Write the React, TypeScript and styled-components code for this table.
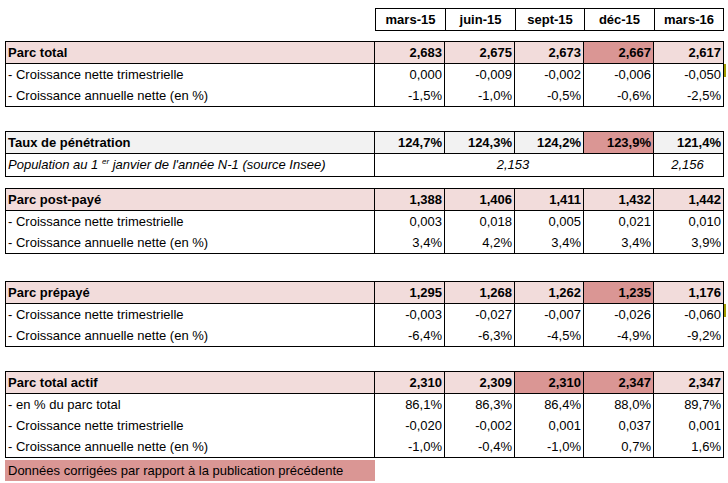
import React from "react";
import styled, { createGlobalStyle } from "styled-components";

const GlobalStyle = createGlobalStyle`
  body {
    margin: 0;
    background: #fff;
    color: #000;
    font-family: "Liberation Sans", Arial, sans-serif;
    font-size: 13px;
  }
`;

const PINK = "#f2dcdb";
const RED = "#da9694";
const GREY = "#f2f2f2";

const Page = styled.div`
  width: 728px;
  height: 483px;
  padding: 8px 0 0 5px;
  box-sizing: border-box;
  display: flex;
  flex-direction: column;
`;

const HeaderBar = styled.div`
  margin-left: 370px;
  width: 349px;
  height: 23px;
  box-sizing: border-box;
  border: 1px solid #000;
  display: grid;
  grid-template-columns: 69px 70px 69px 70px 69px;
`;

const HeaderCell = styled.div`
  font-weight: bold;
  text-align: center;
  line-height: 21px;
  & + & {
    border-left: 1px solid #000;
  }
`;

const Section = styled.div<{ $gap: number }>`
  margin-top: ${(p) => p.$gap}px;
  width: 719px;
  box-sizing: border-box;
  border: 1px solid #000;
  display: grid;
  grid-template-columns: 368px 70px 70px 69px 70px 70px;
`;

const Cell = styled.div<{
  $bg?: string;
  $head?: boolean;
  $label?: boolean;
  $italic?: boolean;
  $center?: boolean;
  $span?: number;
  $h?: number;
  $mark?: boolean;
}>`
  height: ${(p) => p.$h ?? 21}px;
  line-height: ${(p) => p.$h ?? 21}px;
  box-sizing: border-box;
  background: ${(p) => p.$bg ?? "transparent"};
  font-weight: ${(p) => (p.$head ? "bold" : "normal")};
  font-style: ${(p) => (p.$italic ? "italic" : "normal")};
  text-align: ${(p) => (p.$label ? "left" : p.$center ? "center" : "right")};
  padding: ${(p) => (p.$label ? "0 0 0 2px" : "0 2px 0 0")};
  border-left: ${(p) => (p.$label ? "none" : "1px solid #000")};
  border-bottom: ${(p) => (p.$head ? "1px solid #000" : "none")};
  grid-column: ${(p) => (p.$span ? `span ${p.$span}` : "auto")};
  white-space: nowrap;
  position: relative;
  ${(p) =>
    p.$mark &&
    `&::after {
      content: "";
      position: absolute;
      right: -3px;
      top: 0;
      width: 2px;
      height: 13px;
      background: #a09a00;
    }`}
`;

const Note = styled.div`
  margin-top: 2px;
  width: 370px;
  height: 21px;
  line-height: 21px;
  background: ${RED};
  padding-left: 3px;
  box-sizing: border-box;
`;

type Row = {
  label: React.ReactNode;
  values: string[];
  red?: number[];
  mark?: boolean;
};

type Group = {
  gap: number;
  bg: string;
  title: Row;
  rows: Row[];
};

const months = ["mars-15", "juin-15", "sept-15", "déc-15", "mars-16"];

const groups: Group[] = [
  {
    gap: 10,
    bg: PINK,
    title: { label: "Parc total", values: ["2,683", "2,675", "2,673", "2,667", "2,617"], red: [3] },
    rows: [
      { label: "- Croissance nette trimestrielle", values: ["0,000", "-0,009", "-0,002", "-0,006", "-0,050"], mark: true },
      { label: "- Croissance annuelle nette (en %)", values: ["-1,5%", "-1,0%", "-0,5%", "-0,6%", "-2,5%"] },
    ],
  },
  {
    gap: 11,
    bg: PINK,
    title: { label: "Parc post-payé", values: ["1,388", "1,406", "1,411", "1,432", "1,442"] },
    rows: [
      { label: "- Croissance nette trimestrielle", values: ["0,003", "0,018", "0,005", "0,021", "0,010"] },
      { label: "- Croissance annuelle nette (en %)", values: ["3,4%", "4,2%", "3,4%", "3,4%", "3,9%"] },
    ],
  },
  {
    gap: 27,
    bg: PINK,
    title: { label: "Parc prépayé", values: ["1,295", "1,268", "1,262", "1,235", "1,176"], red: [3] },
    rows: [
      { label: "- Croissance nette trimestrielle", values: ["-0,003", "-0,027", "-0,007", "-0,026", "-0,060"], mark: true },
      { label: "- Croissance annuelle nette (en %)", values: ["-6,4%", "-6,3%", "-4,5%", "-4,9%", "-9,2%"] },
    ],
  },
  {
    gap: 24,
    bg: PINK,
    title: { label: "Parc total actif", values: ["2,310", "2,309", "2,310", "2,347", "2,347"], red: [2, 3] },
    rows: [
      { label: "- en % du parc total", values: ["86,1%", "86,3%", "86,4%", "88,0%", "89,7%"] },
      { label: "- Croissance nette trimestrielle", values: ["-0,020", "-0,002", "0,001", "0,037", "0,001"] },
      { label: "- Croissance annuelle nette (en %)", values: ["-1,0%", "-0,4%", "-1,0%", "0,7%", "1,6%"] },
    ],
  },
];

const TitleRow = ({ row, bg }: { row: Row; bg: string }) => (
  <>
    <Cell $label $head $h={22} $bg={bg}>
      {row.label}
    </Cell>
    {row.values.map((v, i) => (
      <Cell key={i} $head $h={22} $bg={row.red?.includes(i) ? RED : bg}>
        {v}
      </Cell>
    ))}
  </>
);

const SubRow = ({ row }: { row: Row }) => (
  <>
    <Cell $label>{row.label}</Cell>
    {row.values.map((v, i) => (
      <Cell key={i} $mark={row.mark && i === 4}>
        {v}
      </Cell>
    ))}
  </>
);

const GroupBlock = ({ group }: { group: Group }) => (
  <Section $gap={group.gap}>
    <TitleRow row={group.title} bg={group.bg} />
    {group.rows.map((r, i) => (
      <SubRow key={i} row={r} />
    ))}
  </Section>
);

const Sup = styled.sup`
  font-size: 8px;
  vertical-align: 5px;
  line-height: 0;
`;

const PenetrationBlock = () => (
  <Section $gap={24}>
    <TitleRow
      row={{ label: "Taux de pénétration", values: ["124,7%", "124,3%", "124,2%", "123,9%", "121,4%"], red: [3] }}
      bg={GREY}
    />
    <Cell $label $italic $h={22}>
      Population au 1 <Sup>er</Sup> janvier de l'année N-1 (source Insee)
    </Cell>
    <Cell $italic $center $span={4} $h={22}>
      2,153
    </Cell>
    <Cell $italic $center $h={22}>
      2,156
    </Cell>
  </Section>
);

export default function App() {
  return (
    <>
      <GlobalStyle />
      <Page>
        <HeaderBar>
          {months.map((m) => (
            <HeaderCell key={m}>{m}</HeaderCell>
          ))}
        </HeaderBar>
        <GroupBlock group={groups[0]} />
        <PenetrationBlock />
        <GroupBlock group={groups[1]} />
        <GroupBlock group={groups[2]} />
        <GroupBlock group={groups[3]} />
        <Note>Données corrigées par rapport à la publication précédente</Note>
      </Page>
    </>
  );
}
